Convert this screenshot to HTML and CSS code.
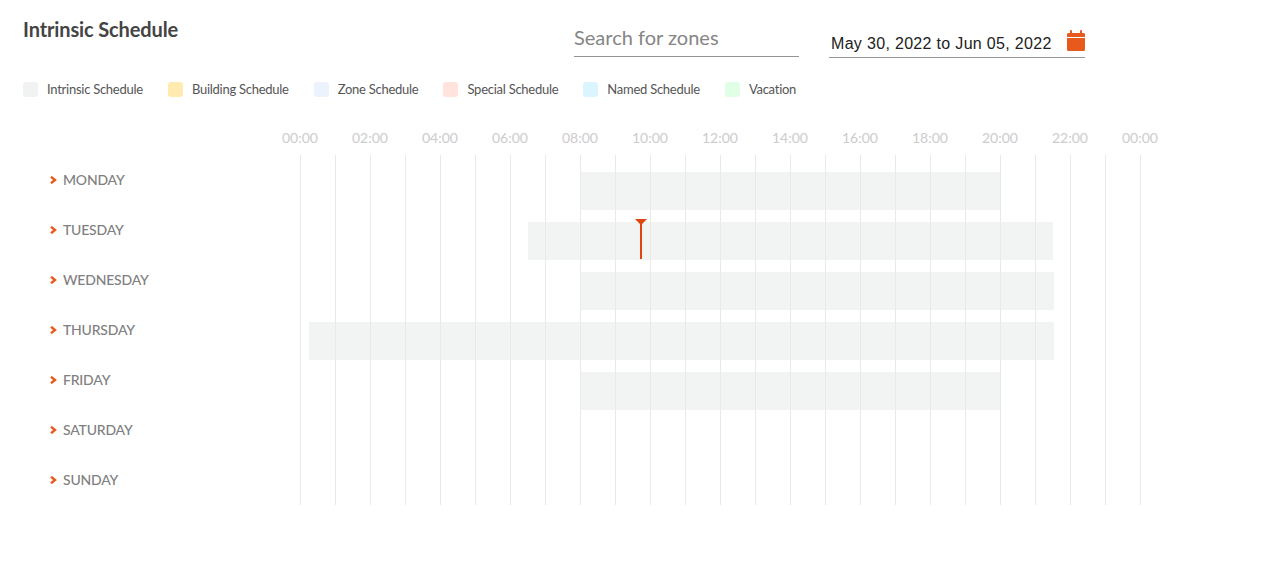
FILE: index.html
```html
<!DOCTYPE html>
<html lang="en">
<head>
<meta charset="utf-8">
<title>Intrinsic Schedule</title>
<link rel="stylesheet" href="styles.css">
</head>
<body>
<main class="page">
  <header class="top">
    <h1 class="title">Intrinsic Schedule</h1>
    <div class="search">Search for zones</div>
    <div class="dates">
      <span class="dates-text">May 30, 2022 to Jun 05, 2022</span>
      <svg class="cal" viewBox="0 0 18 21" width="18" height="21" aria-hidden="true">
        <path fill="#e8591c" d="M4 0a1 1 0 0 1 1 1V3h8V1a1 1 0 0 1 2 0V3h1.500A1.500 1.500 0 0 1 18 4.500V7H0V4.500A1.500 1.500 0 0 1 1.500 3H3V1a1 1 0 0 1 1-1ZM0 8h18v11.500a1.500 1.500 0 0 1-1.500 1.500h-15A1.500 1.500 0 0 1 0 19.500Z"/>
      </svg>
    </div>
  </header>

  <ul class="legend">
    <li class="legend-item"><span class="swatch s-intrinsic"></span>Intrinsic Schedule</li>
    <li class="legend-item"><span class="swatch s-building"></span>Building Schedule</li>
    <li class="legend-item"><span class="swatch s-zone"></span>Zone Schedule</li>
    <li class="legend-item"><span class="swatch s-special"></span>Special Schedule</li>
    <li class="legend-item"><span class="swatch s-named"></span>Named Schedule</li>
    <li class="legend-item"><span class="swatch s-vacation"></span>Vacation</li>
  </ul>

  <div class="hours">
    <span>00:00</span><span>02:00</span><span>04:00</span><span>06:00</span><span>08:00</span><span>10:00</span><span>12:00</span><span>14:00</span><span>16:00</span><span>18:00</span><span>20:00</span><span>22:00</span><span>00:00</span>
  </div>

  <section class="chart">
    <div class="days">
      <div class="day"><svg class="chev" viewBox="0 0 7 8" width="7" height="8"><path d="M1 0.800L5 4 1 7.200" /></svg>MONDAY</div>
      <div class="day"><svg class="chev" viewBox="0 0 7 8" width="7" height="8"><path d="M1 0.800L5 4 1 7.200" /></svg>TUESDAY</div>
      <div class="day"><svg class="chev" viewBox="0 0 7 8" width="7" height="8"><path d="M1 0.800L5 4 1 7.200" /></svg>WEDNESDAY</div>
      <div class="day"><svg class="chev" viewBox="0 0 7 8" width="7" height="8"><path d="M1 0.800L5 4 1 7.200" /></svg>THURSDAY</div>
      <div class="day"><svg class="chev" viewBox="0 0 7 8" width="7" height="8"><path d="M1 0.800L5 4 1 7.200" /></svg>FRIDAY</div>
      <div class="day"><svg class="chev" viewBox="0 0 7 8" width="7" height="8"><path d="M1 0.800L5 4 1 7.200" /></svg>SATURDAY</div>
      <div class="day"><svg class="chev" viewBox="0 0 7 8" width="7" height="8"><path d="M1 0.800L5 4 1 7.200" /></svg>SUNDAY</div>
    </div>
    <div class="timeline">
      <div class="track"><div class="bar" style="margin-left:280px;width:420px"></div></div>
      <div class="track">
        <div class="bar" style="margin-left:228px;width:525px"></div>
        <svg class="now" viewBox="0 0 12 40" width="12" height="40" aria-hidden="true">
          <path fill="#e0450e" d="M0 0h12L7 5V40H5V5Z"/>
        </svg>
      </div>
      <div class="track"><div class="bar" style="margin-left:280px;width:474px"></div></div>
      <div class="track"><div class="bar" style="margin-left:9px;width:745px"></div></div>
      <div class="track"><div class="bar" style="margin-left:280px;width:420px"></div></div>
      <div class="track"></div>
      <div class="track"></div>
    </div>
  </section>
</main>
</body>
</html>
```

FILE: styles.css
```css
* { box-sizing: border-box; }

html, body {
  margin: 0;
  background: #fff;
}

.page {
  width: 1286px;
  height: 567px;
  overflow: hidden;
  font-family: Lato, "Liberation Sans", sans-serif;
  color: #444;
}

.top {
  display: flex;
  align-items: flex-start;
  height: 72px;
  padding: 18px 0 0 23px;
}

.title {
  width: 551px;
  margin: -1px 0 0;
  font-size: 20px;
  line-height: 24px;
  font-weight: 700;
  color: #444;
  letter-spacing: -0.13px;
}

.search {
  width: 225px;
  height: 39px;
  margin-right: 30px;
  border-bottom: 1px solid #949494;
  font-size: 20px;
  line-height: 38px;
  color: #858585;
}

.dates {
  display: flex;
  align-items: flex-start;
  width: 256px;
  height: 40px;
  padding: 14px 0 0 2px;
  border-bottom: 1px solid #949494;
  font-family: "Liberation Sans", Arial, sans-serif;
  font-size: 16px;
  line-height: 24px;
  letter-spacing: 0.32px;
  color: #222;
}

.dates-text { width: 236px; }

.cal { margin-top: -2px; }

.legend {
  display: flex;
  height: 34px;
  margin: 0;
  padding: 0 0 0 23px;
  list-style: none;
}

.legend-item {
  display: flex;
  align-items: center;
  height: 34px;
  margin-right: 25px;
  font-size: 13px;
  letter-spacing: -0.26px;
  color: #555;
}

.swatch {
  width: 15px;
  height: 15px;
  margin-right: 9px;
  border-radius: 3px;
}

.s-intrinsic { background: #f1f2f2; }
.s-building { background: #ffeab0; }
.s-zone { background: #edf2ff; }
.s-special { background: #ffe3dc; }
.s-named { background: #dbf5ff; }
.s-vacation { background: #e0ffe6; }

.hours {
  display: grid;
  grid-template-columns: repeat(13, 70px);
  margin: 0 0 0 265px;
  padding-top: 22px;
  height: 49px;
  font-size: 14px;
  line-height: 20px;
  text-align: center;
  color: #ccc;
}

.chart { display: flex; }

.days {
  width: 300px;
  flex: none;
}

.day {
  display: flex;
  align-items: center;
  height: 50px;
  padding: 0 0 2px 50px;
  font-size: 14px;
  font-weight: 500;
  letter-spacing: -0.2px;
  color: #808080;
}

.chev {
  margin: 1px 6px 0 0;
  fill: none;
  stroke: #e8591c;
  stroke-width: 2.4;
}

.timeline {
  position: relative;
  width: 841px;
}

.timeline::after {
  content: "";
  position: absolute;
  inset: 0;
  background: repeating-linear-gradient(to right, #e9e9e9 0, #e9e9e9 1px, transparent 1px, transparent 35px);
  pointer-events: none;
}

.track {
  position: relative;
  height: 50px;
  padding-top: 17px;
}

.bar {
  height: 38px;
  background: #f2f4f3;
}

.now {
  position: absolute;
  left: 335px;
  top: 14px;
  z-index: 1;
}
```
